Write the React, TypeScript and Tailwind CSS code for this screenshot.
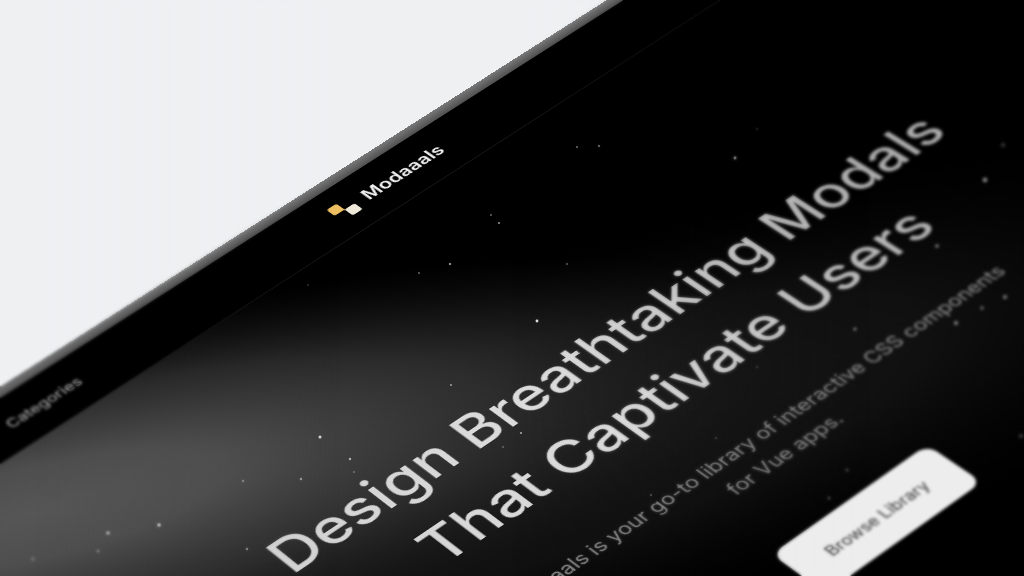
type Star = { x: number; y: number; r: number; opacity: number };

const stars: Star[] = [
  [599, 146, 1, 0.6], [577, 147, 1, 0.5], [735, 158, 1.4, 0.7], [491, 215, 1, 0.4], [499, 223, 1, 0.6],
  [450, 264, 1.1, 0.7], [419, 273, 1, 0.4], [567, 264, 1, 0.4], [537, 321, 1.4, 0.9], [320, 437, 1.5, 0.8],
  [350, 459, 1.2, 0.6], [301, 479, 1.2, 0.5], [243, 481, 1.2, 0.4], [159, 525, 1.8, 0.7], [108, 533, 1.8, 0.6],
  [98, 551, 1.5, 0.35], [247, 549, 1.2, 0.5], [451, 385, 1.1, 0.5], [521, 433, 1.1, 0.6], [308, 285, 1, 0.2],
  [985, 180, 2.4, 0.5], [937, 246, 1.8, 0.5], [855, 329, 1.6, 0.5], [956, 323, 2, 0.5], [982, 308, 1.8, 0.4],
  [1005, 297, 2.2, 0.4], [847, 470, 1.5, 0.3], [829, 498, 1.5, 0.3], [651, 495, 1, 0.4], [716, 438, 1, 0.3],
  [757, 129, 1, 0.25], [1003, 145, 2.2, 0.2], [354, 472, 1, 0.3], [503, 447, 1, 0.3], [33, 559, 2, 0.2],
  [757, 367, 1, 0.3], [1021, 436, 2.2, 0.2],
].map(([x, y, r, opacity]) => ({ x, y, r, opacity }));

function Stars() {
  return (
    <svg className="pointer-events-none absolute inset-0 size-full" aria-hidden="true">
      {stars.map(({ x, y, r, opacity }) => (
        <circle key={`${x}-${y}`} cx={x} cy={y} r={r} fill="#fff" opacity={opacity} />
      ))}
    </svg>
  );
}

function LogoMark() {
  return (
    <svg className="size-6" viewBox="0 0 24 24" aria-hidden="true">
      <path
        d="M3 0h6.500a2.500 2.500 0 0 1 2.500 2.500V10.500a1.500 1.500 0 0 0 1.500 1.500L12 13.500A1.500 1.500 0 0 0 10.500 12H2.500A2.500 2.500 0 0 1 0 9.500V3a3 3 0 0 1 3-3Z"
        fill="#eebf62"
      />
      <rect x="12" y="12" width="12" height="12" rx="2.500" fill="#efe9da" />
    </svg>
  );
}

function Glow() {
  return (
    <svg
      className="pointer-events-none absolute inset-0 size-full"
      viewBox="0 68 1600 932"
      preserveAspectRatio="xMidYMin slice"
      aria-hidden="true"
    >
      <defs>
        <radialGradient id="glow">
          <stop offset="0" stopColor="#565656" />
          <stop offset="0.25" stopColor="#4e4e4e" />
          <stop offset="0.6" stopColor="#303030" stopOpacity="0.85" />
          <stop offset="1" stopColor="#141414" stopOpacity="0" />
        </radialGradient>
        <radialGradient id="haze">
          <stop offset="0" stopColor="#1c1c1c" />
          <stop offset="0.5" stopColor="#141414" stopOpacity="0.8" />
          <stop offset="1" stopColor="#000" stopOpacity="0" />
        </radialGradient>
      </defs>
      <ellipse cx="640" cy="390" rx="760" ry="260" fill="url(#haze)" transform="rotate(20 640 390)" />
      <ellipse cx="300" cy="140" rx="700" ry="230" fill="url(#glow)" transform="rotate(26 300 140)" />
    </svg>
  );
}

function Header() {
  return (
    <header className="border-b border-[#181818]">
      <nav className="mx-auto grid h-[68px] w-full max-w-[904px] grid-cols-3 items-center">
        <a href="#categories" className="text-[#b8b8b8]">
          Categories
        </a>
        <a href="#home" className="flex items-center justify-center gap-3 pr-2">
          <LogoMark />
          <span className="text-xl font-semibold text-[#f2f2f2]">Modaaals</span>
        </a>
      </nav>
    </header>
  );
}

function Hero() {
  return (
    <section className="relative flex flex-1 flex-col items-center overflow-hidden pt-[231px] text-center">
      <Glow />
      <h1 className="relative w-full bg-linear-to-r from-[#d4d4d4] from-30% via-[#dedede] via-45% to-[#aaa] to-70% bg-clip-text text-[58px] leading-[84px] font-medium text-transparent">
        Design Breathtaking Modals
        <br />
        That Captivate Users
      </h1>
      <p className="relative mt-10 text-xl leading-8 text-[#949494]">
        Modaaals is your go-to library of interactive CSS components
        <br />
        for Vue apps.
      </p>
      <button type="button" className="relative mt-[62px] h-16 w-[180px] rounded-xl bg-[#ededed] text-[#333]">
        Browse Library
      </button>
    </section>
  );
}

export default function App() {
  return (
    <main className="relative h-screen overflow-hidden bg-[#eef0f2] font-['Inter',sans-serif]">
      {/* Page surface, tilted in perspective around the middle of its top edge */}
      <div className="absolute top-0 left-0 flex min-h-[1000px] w-[1600px] origin-top-left [transform:matrix3d(0.84506,-0.50822,0,0.000078437,0.62794,0.45223,0,-0.00015553,0,0,1,0,367.99,163.17,0,1)_translateX(-800px)] flex-col bg-black">
        <div className="absolute inset-x-0 bottom-full h-3 bg-linear-to-t from-[#505050] to-[#787878]" />
        <Header />
        <Hero />
      </div>
      <Stars />
      {/* Depth of field: soft at both sides, crisp in the middle */}
      <div className="pointer-events-none absolute inset-0 backdrop-blur-[0.5px]" />
      <div className="pointer-events-none absolute inset-y-0 right-0 w-1/2 mask-l-from-30% backdrop-blur-[1.500px]" />
      <div className="pointer-events-none absolute inset-y-0 left-0 w-1/3 mask-r-from-10% backdrop-blur-[1.500px]" />
    </main>
  );
}
